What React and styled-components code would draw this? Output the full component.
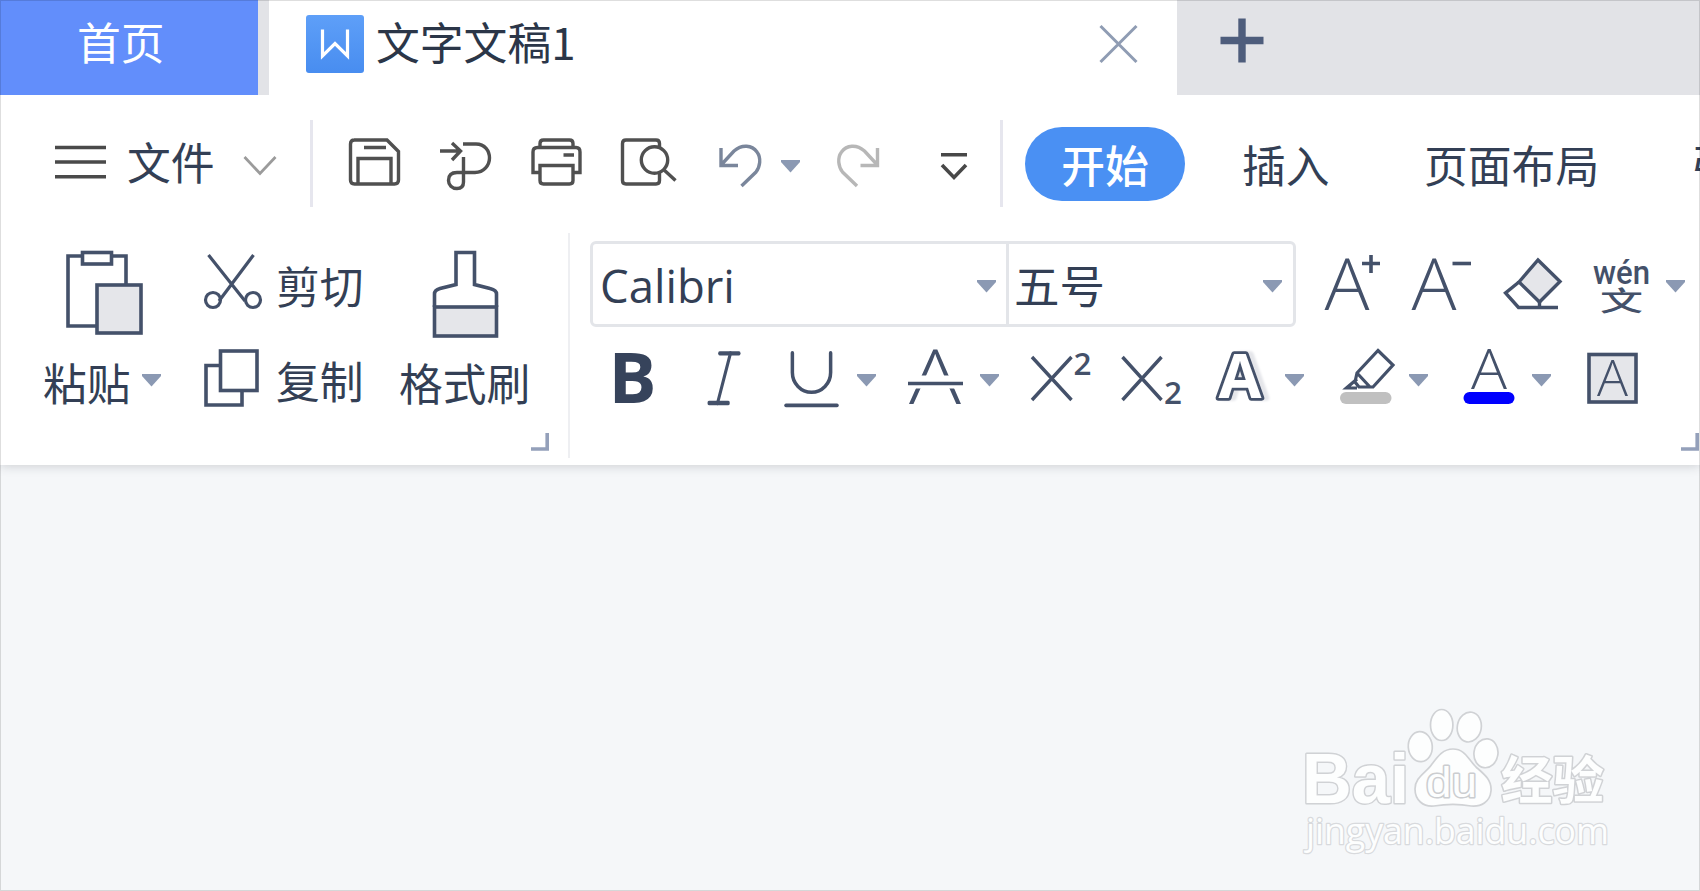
import React from "react";
import styled, { createGlobalStyle } from "styled-components";
import { Italic, Underline } from "lucide-react";

const INK = "#44516a";
const TOOL = "#505050";
const ARROW = "#8b99b3";
const LIGHT = "#e5e6ea";

const GlobalStyle = createGlobalStyle`
  * { box-sizing: border-box; }
  body { margin: 0; background: #f5f7f9; overflow: hidden; }
`;

const Window = styled.div`
  width: 1700px;
  height: 891px;
  display: flex;
  flex-direction: column;
  position: relative;
  overflow: hidden;
  background: #f5f7f9;
  color: #333f55;
  font-family: "Noto Sans CJK SC", sans-serif;
  font-size: 43.8px;
  line-height: 44px;
  white-space: nowrap;
`;

const Frame = styled.div`
  position: absolute;
  inset: 0;
  border: 1px solid rgba(0, 0, 0, 0.13);
  pointer-events: none;
`;

const TabBar = styled.header`
  display: flex;
  flex: none;
  height: 95px;
  background: #e2e3e7;
`;

const HomeTab = styled.div`
  width: 258px;
  padding: 19px 0 0 77px;
  margin-right: 11px;
  background: #628efb;
  color: #fff;
`;

const DocumentTab = styled.div`
  display: flex;
  width: 908px;
  padding-left: 37px;
  background: #fff;
  color: #2b3648;
`;

const TabTitle = styled.span`
  flex: none;
  width: 734px;
  padding: 19px 0 0 12px;
`;

const MenuBar = styled.nav`
  display: flex;
  flex: none;
  height: 125px;
  background: #fff;
`;

const MenuItem = styled.span`
  flex: none;
  width: ${(p) => p.$width}px;
  margin-left: ${(p) => p.$gap}px;
  padding-top: ${(p) => p.$top || 47}px;
`;

const ActiveMenu = styled.span`
  flex: none;
  width: 160px;
  height: 74px;
  margin: 32px 0 0 22px;
  padding-top: 15px;
  border-radius: 37px;
  background: #4a90f3;
  color: #fff;
  font-weight: 500;
  text-align: center;
`;

const Divider = styled.i`
  flex: none;
  width: ${(p) => p.$width || 3}px;
  height: ${(p) => p.$height}px;
  margin: ${(p) => p.$top}px 0 0 ${(p) => p.$gap || 0}px;
  background: ${(p) => p.$color || "#e6e6ee"};
`;

const Ribbon = styled.section`
  display: flex;
  flex: none;
  height: 245px;
  background: #fff;
  box-shadow: 0 1px 10px rgba(60, 65, 75, 0.22);
  clip-path: inset(0 0 -20px 0);
`;

const ClipboardGroup = styled.div`
  display: flex;
  width: 568px;
  padding: 30px 0 0 43px;
`;

const Column = styled.div`
  display: flex;
  flex-direction: column;
  flex: none;
  width: ${(p) => p.$width}px;
  margin-left: ${(p) => p.$gap || 0}px;
`;

const Line = styled.div`
  display: flex;
  flex: none;
  height: ${(p) => p.$height}px;
  padding-left: ${(p) => p.$inset || 0}px;
`;

const Label = styled.span`
  flex: none;
  width: ${(p) => p.$width || 88}px;
  margin: ${(p) => p.$top || 0}px 0 0 ${(p) => p.$gap || 0}px;
`;

const FontGroup = styled.div`
  display: flex;
  flex-direction: column;
  width: 1130px;
  padding: 21px 0 0 20px;
`;

const SelectPair = styled.div`
  display: flex;
  flex: none;
  width: 706px;
  height: 86px;
  border: 3px solid #e3e5e9;
  border-radius: 6px;
`;

const Select = styled.div`
  display: flex;
  flex: none;
  width: ${(p) => p.$width}px;
  padding-left: ${(p) => p.$inset}px;
  border-right: ${(p) => (p.$divided ? "3px solid #e3e5e9" : "none")};
`;

const SelectText = styled.span`
  width: ${(p) => p.$width}px;
  padding-top: ${(p) => p.$top}px;
  font-family: ${(p) => (p.$latin ? '"Open Sans", sans-serif' : "inherit")};
  font-size: 45.5px;
`;

const Drawing = styled.svg`
  display: block;
  flex: none;
  margin-left: ${(p) => p.$gap || 0}px;
  overflow: visible;
  fill: none;
  stroke: ${(p) => p.$stroke || INK};
  stroke-width: ${(p) => p.$weight || 3.6};
`;

const Glyph = styled.text`
  fill: ${(p) => p.$fill || INK};
  stroke: ${(p) => p.$stroke || "none"};
  stroke-width: ${(p) => p.$strokeWidth || 0};
  stroke-linejoin: round;
  paint-order: stroke;
  font-family: ${(p) => p.$family || '"Open Sans", sans-serif'};
  font-weight: ${(p) => p.$bold || 300};
  font-size: ${(p) => p.$size}px;
  filter: ${(p) => (p.$shadow ? `drop-shadow(5px 0 1px ${LIGHT})` : "none")};
`;

const Workspace = styled.main`
  display: flex;
  flex: 1;
  justify-content: flex-end;
  align-items: flex-end;
  padding: 0 85px 30px 0;
`;

const Icon = ({ x, y, w, h, gap, color, weight, children }) => (
  <Drawing width={w} height={h} viewBox={`${x} ${y} ${w} ${h}`} $gap={gap} $stroke={color} $weight={weight}>
    {children}
  </Drawing>
);

const Caret = ({ gap, top, h = 125 }) => (
  <Icon x={0} y={0} w={19} h={h} gap={gap}>
    <path d={`M0 ${top}h19v2l-9.5 10.5l-9.5-10.5z`} fill={ARROW} stroke="none" />
  </Icon>
);

const Letter = ({ x, y, size, width, children, ...rest }) => (
  <Glyph x={x} y={y} $size={size} textLength={width} lengthAdjust="spacingAndGlyphs" {...rest}>
    {children}
  </Glyph>
);

const Corner = ({ x }) => (
  <Icon x={x} y={431} w={18} h={21} color="#94a0ba" weight={3.6}>
    <path d={`M${x} 449H${x + 16.2}V433`} />
  </Icon>
);

const QuickTools = () => (
  <>
    <Icon x={348} y={95} w={54} h={125} gap={35} color={TOOL} weight={3.4}>
      <path d="M354 140H387L398.500 151.500V180Q398.500 184 394.500 184H354.500Q350.500 184 350.500 180V144Q350.500 140 354.500 140ZM358 184V158.500H391V184M364 147.500H386" />
    </Icon>
    <Icon x={439} y={95} w={54} h={125} gap={37} color={TOOL} weight={3.4}>
      <path d="M440 151H460M452 143L460.500 151L452 160M463 144H476C485 144 489.500 151 489.500 158S484 172.500 475 172.500H457C451 172.500 448.500 176 448.500 180.500S452 188.500 457 188.500C461 188.500 463.500 186.500 463.500 182V157" />
    </Icon>
    <Icon x={530} y={95} w={54} h={125} gap={37} color={TOOL} weight={3.4}>
      <path d="M540 147V143.500Q540 140 543.500 140H569.500Q573 140 573 143.500V147M539 172.500H533V152Q533 147.500 537.500 147.500H576Q580 147.500 580 152V172.500H574M563.500 155H574M540 165.500H573V180.500Q573 184 569.500 184H543.500Q540 184 540 180.500Z" />
    </Icon>
    <Icon x={620} y={95} w={57} h={125} gap={36} color={TOOL} weight={3.4}>
      <path d="M659.500 147V143.500Q659.500 140 656 140H626Q622.500 140 622.500 143.500V180.500Q622.500 184 626 184H656Q659.500 184 659.500 180.500V173M663 169L675.500 180.500" />
      <circle cx="654.500" cy="160" r="13.200" />
    </Icon>
    <Icon x={718} y={95} w={44} h={125} gap={41} color="#7a869b" weight={3.4}>
      <path d="M721 148V165.500H738M722 164L734 151C742 144 752 145 757 152C761.500 158 760 167 756 172L741.500 186" />
    </Icon>
    <Caret gap={19} top={65} />
    <Icon x={836} y={95} w={44} h={125} gap={37} color="#b7b7b7" weight={3.400}>
      <path d="M876.500 148V165.500H859.500M875.500 164L863.500 151C855.500 144 845.500 145 840.500 152C836 158 837.500 167 841.500 172L856 186" />
    </Icon>
    <Icon x={938} y={95} w={30} h={125} gap={58} color="#484848" weight={3.600}>
      <path d="M940 154.700H966M941 165L953 177.500L965 165" />
    </Icon>
  </>
);

const Watermark = () => (
  <Drawing width="315" height="150" viewBox="1300 711 315 150" $stroke="#d0d2d5" $weight={1.7}>
    <g fill="#fdfefe">
      <ellipse cx="1420.300" cy="746.700" rx="12" ry="15" transform="rotate(-4 1420 747)" />
      <ellipse cx="1441.700" cy="725" rx="11.200" ry="15.500" />
      <ellipse cx="1469.300" cy="727" rx="12" ry="15" transform="rotate(10 1469 727)" />
      <ellipse cx="1486" cy="753.300" rx="12" ry="14.500" transform="rotate(8 1486 753)" />
      <path d="M1453 749C1465 749 1468 759 1476 767C1484 774 1492 780 1491 791C1490 802 1481 807 1471 806C1460 804 1446 804 1434 806C1423 807 1415 800 1415 789C1415 777 1426 773 1432 764C1438 756 1443 749 1453 749Z" />
    </g>
    <Letter x={1302} y={803} size={71} width={107} $bold={700} $family={'"Liberation Sans", sans-serif'} $fill="#fdfefe" $stroke="#d0d2d5" $strokeWidth={3}>Bai</Letter>
    <Letter x={1426} y={796.500} size={43} width={51} $bold={400} $family={'"Liberation Sans", sans-serif'} $fill="#fdfefe" $stroke="#cbcdd0" $strokeWidth={3}>du</Letter>
    <Letter x={1501} y={798.500} size={51} width={103} $bold={700} $family={'"Noto Sans CJK SC", sans-serif'} $fill="#fdfefe" $stroke="#d0d2d5" $strokeWidth={3}>经验</Letter>
    <Letter x={1306} y={844} size={36} width={303} $bold={400} $fill="#fdfefe" $stroke="#d8dadd" $strokeWidth={2.500}>jingyan.baidu.com</Letter>
  </Drawing>
);

export default function App() {
  return (
    <Window>
      <GlobalStyle />
      <TabBar>
        <HomeTab>首页</HomeTab>
        <DocumentTab>
          <Icon x={306} y={0} w={58} h={95} color="#fff" weight={3.200}>
            <defs>
              <linearGradient id="doc" x1="0" y1="0" x2="0" y2="1">
                <stop offset="0" stopColor="#5e9ff8" />
                <stop offset="1" stopColor="#488df0" />
              </linearGradient>
            </defs>
            <rect x="306" y="15" width="58" height="58" rx="3" fill="url(#doc)" stroke="none" />
            <path d="M322.500 29.500V56L335 43.500L347.500 56V29.500" />
          </Icon>
          <TabTitle>文字文稿1</TabTitle>
          <Icon x={1098} y={0} w={40} h={95} color="#8f9cb3" weight={3}>
            <path d="M1100.500 26L1136.500 62M1136.500 26L1100.500 62" />
          </Icon>
        </DocumentTab>
        <Icon x={1220} y={0} w={44} h={95} gap={43} color="#4e5d7c" weight={7.400}>
          <path d="M1220.500 40.500H1263.500M1242 18.500V62.500" />
        </Icon>
      </TabBar>

      <MenuBar>
        <Icon x={55} y={95} w={51} h={125} gap={55} color="#4a4a4a" weight={3.600}>
          <path d="M55 147.500H106M55 162H106M55 176.700H106" />
        </Icon>
        <MenuItem $gap={21} $width={88} $top={44}>文件</MenuItem>
        <Icon x={243} y={95} w={34} h={125} gap={28} color="#9b9b9b" weight={2.800}>
          <path d="M244.500 157L260 173.500L275.500 157" />
        </Icon>
        <Divider $gap={33} $top={25} $height={87} />
        <QuickTools />
        <Divider $gap={31} $top={25} $height={87} />
        <ActiveMenu>开始</ActiveMenu>
        <MenuItem $gap={57} $width={88}>插入</MenuItem>
        <MenuItem $gap={94} $width={176}>页面布局</MenuItem>
        <MenuItem $gap={91} $width={44}>引用</MenuItem>
      </MenuBar>

      <Ribbon>
        <ClipboardGroup>
          <Column $width={118}>
            <Line $height={110} $inset={22}>
              <Icon x={65} y={250} w={80} h={86}>
                <path d="M68 256H126V326H68Z" />
                <rect x="82.500" y="252.500" width="29" height="11.500" fill="#fff" />
                <rect x="97" y="285" width="44" height="48" fill={LIGHT} />
              </Icon>
            </Line>
            <Line $height={48}>
              <Label>粘贴</Label>
              <Caret gap={11} top={14} h={48} />
            </Line>
          </Column>
          <Column $width={160} $gap={42}>
            <Line $height={97}>
              <Icon x={203} y={250} w={60} h={86} weight={3.200}>
                <path d="M208.500 255L245 301M253.500 255L219 301" />
                <ellipse cx="213" cy="300" rx="7.500" ry="7.500" />
                <ellipse cx="253" cy="300" rx="7.500" ry="7.500" />
              </Icon>
              <Label $gap={13} $top={13}>剪切</Label>
            </Line>
            <Line $height={70}>
              <Icon x={203} y={347} w={60} h={62}>
                <path d="M219 365.500H206V405H242V391" />
                <rect x="220.500" y="351" width="36.500" height="39.500" />
              </Icon>
              <Label $gap={13} $top={11}>复制</Label>
            </Line>
          </Column>
          <Column $width={134} $gap={36}>
            <Line $height={110} $inset={33}>
              <Icon x={432} y={250} w={68} h={90}>
                <path d="M434.500 307V294Q434.500 290 440 288.500L456 284.500V252.500H474.500V284.500L490 288.500Q496.500 290 496.500 294V307" />
                <rect x="434.500" y="307" width="62" height="29" fill={LIGHT} />
              </Icon>
            </Line>
            <Label $width={132}>格式刷</Label>
            <Line $height={47} $inset={132}>
              <Column $width={18}>
                <Line $height={27} />
                <Corner x={531} />
              </Column>
            </Line>
          </Column>
        </ClipboardGroup>
        <Divider $width={2} $top={13} $height={225} $color="#eeeff2" />

        <FontGroup>
          <Line $height={104}>
            <SelectPair>
              <Select $width={416} $inset={7} $divided>
                <SelectText $width={377} $top={19} $latin>Calibri</SelectText>
                <Caret top={36} h={80} />
              </Select>
              <Select $width={284} $inset={5}>
                <SelectText $width={249} $top={18}>五号</SelectText>
                <Caret top={36} h={80} />
              </Select>
            </SelectPair>
            <Icon x={1324} y={241} w={58} h={86} gap={28}>
              <Letter x={1324.500} y={309.500} size={72} width={45}>A</Letter>
              <path d="M1362 263.500H1380M1371 255V273" />
            </Icon>
            <Icon x={1411} y={241} w={61} h={86} gap={29}>
              <Letter x={1411.500} y={309.500} size={72} width={45}>A</Letter>
              <path d="M1452.500 263.500H1471" />
            </Icon>
            <Icon x={1502} y={241} w={60} h={86} gap={30} weight={3.400}>
              <path d="M1519 282L1538 260L1560 281.500L1539.500 302Z" fill={LIGHT} />
              <path d="M1519 282L1505.500 293L1518.500 307.500H1558M1539.500 302V307" />
            </Icon>
            <Icon x={1592} y={241} w={58} h={86} gap={30}>
              <Letter x={1593} y={283.500} size={34} width={57} $bold={500} $family={'Roboto, sans-serif'}>wén</Letter>
              <Letter x={1600} y={311} size={27} width={43} $bold={500} $family={'"Noto Sans CJK SC", sans-serif'}>文</Letter>
            </Icon>
            <Caret gap={16} top={39} h={86} />
          </Line>

          <Line $height={86} $inset={22}>
            <Icon x={612} y={345} w={44} h={62}>
              <Letter x={608.500} y={403} size={70} width={48} $bold={700} $fill="#36435b">B</Letter>
            </Icon>
            <Drawing as={Italic} $gap={53} $weight={1.400} width={30} height={62} viewBox="5 1.300 14 20" preserveAspectRatio="none" />
            <Drawing as={Underline} $gap={47} $weight={1.100} width={51} height={64} viewBox="4 1.600 16 19.500" preserveAspectRatio="none" />
            <Caret gap={20} top={29} h={62} />
            <Icon x={908} y={345} w={56} h={62} gap={32}>
              <Letter x={909} y={403.500} size={76} width={52}>A</Letter>
              <path d="M908 382H963" stroke="#fff" strokeWidth="13" />
              <path d="M908 383.500H963" />
            </Icon>
            <Caret gap={16} top={29} h={62} />
            <Icon x={1030} y={345} w={62} h={62} gap={31} weight={3.400}>
              <path d="M1032 357L1071.500 400M1071.500 357L1032 400" />
              <Letter x={1073.500} y={374.500} size={30} width={18} $bold={600}>2</Letter>
            </Icon>
            <Icon x={1121} y={345} w={62} h={62} gap={29} weight={3.400}>
              <path d="M1122.500 357L1161.500 400M1161.500 357L1122.500 400" />
              <Letter x={1164} y={404} size={30} width={18} $bold={600}>2</Letter>
            </Icon>
            <Icon x={1215} y={345} w={54} h={62} gap={32}>
              <Letter x={1218.500} y={398} size={60} width={43} $bold={700} $fill="#fff" $stroke={INK} $strokeWidth={5.500} $shadow>A</Letter>
            </Icon>
            <Caret gap={16} top={29} h={62} />
            <Icon x={1340} y={345} w={56} h={62} gap={36} weight={3.200}>
              <path d="M1378 350.500L1393 365L1373 387H1359L1355 382L1357 373ZM1357 373L1370 387M1357 379L1346.500 388H1357" />
              <path d="M1346 398H1385.500" stroke="#c0c0c0" strokeWidth="12" strokeLinecap="round" />
            </Icon>
            <Caret gap={13} top={29} h={62} />
            <Icon x={1463} y={345} w={52} h={62} gap={35}>
              <Letter x={1471} y={389} size={56} width={36}>A</Letter>
              <path d="M1469.500 398H1508.500" stroke="#00f" strokeWidth="12" strokeLinecap="round" />
            </Icon>
            <Caret gap={17} top={29} h={62} />
            <Icon x={1587} y={345} w={51} h={62} gap={36}>
              <rect x="1589" y="354.500" width="47" height="47.500" fill={LIGHT} />
              <Letter x={1597} y={396} size={50} width={31}>A</Letter>
            </Icon>
          </Line>
          <Line $height={34} $inset={1091}>
            <Corner x={1682} />
          </Line>
        </FontGroup>
      </Ribbon>

      <Workspace>
        <Watermark />
      </Workspace>
      <Frame />
    </Window>
  );
}
